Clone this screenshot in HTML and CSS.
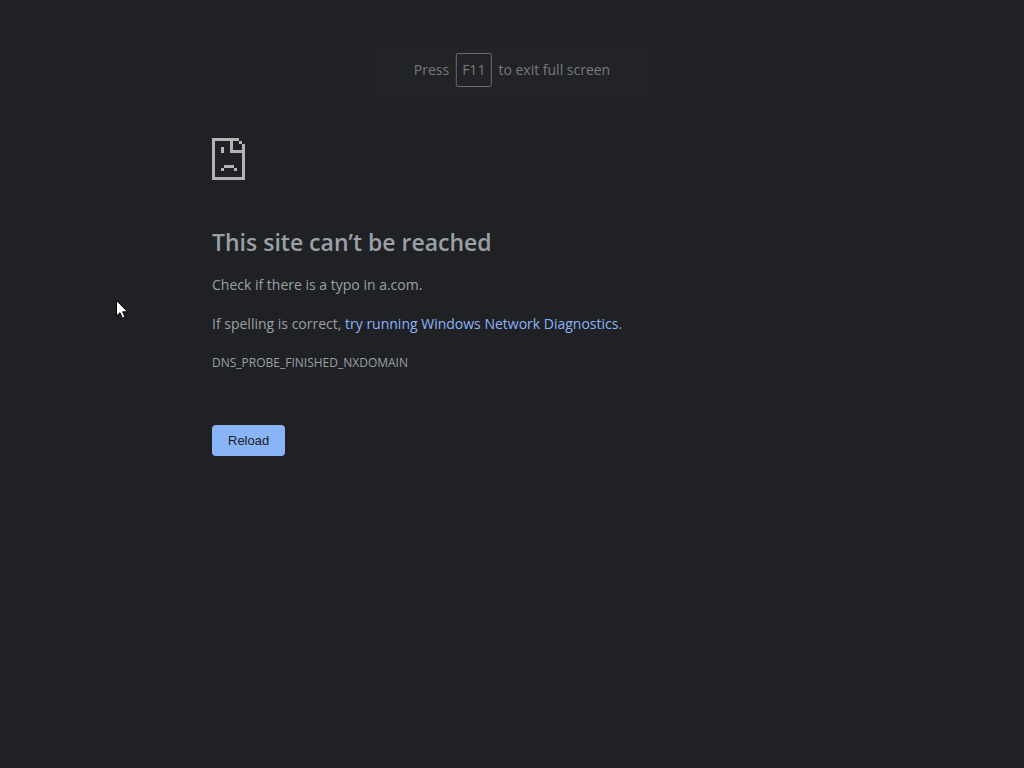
FILE: index.html
```
<!DOCTYPE html>
<html lang="en">
<head>
    <meta charset="UTF-8">
    <meta name="viewport" content="width=device-width, initial-scale=1.0">
    <title>a.com</title>
    <link rel="stylesheet" href="styles.css">
</head>
<body>
    <div class="fullscreen-notice">
        <span>Press</span>
        <kbd>F11</kbd>
        <span>to exit full screen</span>
    </div>

    <main class="error-page">
        <svg class="sad-page" viewBox="0 0 33 42" width="33" height="42" shape-rendering="crispEdges" aria-hidden="true">
            <!-- sheet with folded corner -->
            <path d="M0 0H27V3H30V6H33V42H0ZM3 3V39H30V15H18V3ZM21 3V12H30V6H27V3Z" fill-rule="evenodd"/>
            <!-- face -->
            <path d="M9 9H12V15H9ZM12 27H22V30H12ZM9 30H12V33H9ZM22 30H25V33H22Z"/>
        </svg>

        <h1>This site can’t be reached</h1>
        <p>Check if there is a typo in a.com.</p>
        <p>If spelling is correct, <a href="#">try running Windows Network Diagnostics</a>.</p>
        <div class="error-code">DNS_PROBE_FINISHED_NXDOMAIN</div>

        <button class="reload" type="button">Reload</button>
    </main>

    <svg class="cursor" viewBox="0 0 12 19" width="12" height="19" aria-hidden="true">
        <path d="M0.5 0.5V16L4 12.7L6.5 18.2L9 17L6.6 11.8H11.5Z"/>
    </svg>
</body>
</html>
```
FILE: styles.css
```
body {
    margin: 0;
    min-height: 100vh;
    background-color: #202124;
    color: #9aa0a6;
    font-family: "Open Sans", "Noto Sans", sans-serif;
    font-size: 14px;
    line-height: 24px;
}

/* Full screen hint */
.fullscreen-notice {
    position: absolute;
    top: 47px;
    left: 50%;
    transform: translateX(-50%);
    display: flex;
    align-items: center;
    gap: 7px;
    padding: 6px 39px 10px;
    background-color: #222327;
    border-radius: 4px;
    color: #77797c;
    white-space: nowrap;
}

.fullscreen-notice kbd {
    padding: 4px 5px;
    border: 1px solid #6b6d70;
    border-radius: 2px;
    font: inherit;
}

/* Error page */
.error-page {
    box-sizing: border-box;
    max-width: 600px;
    margin: 0 auto;
    padding-top: 138px;
}

.sad-page {
    display: block;
    margin-bottom: 47px;
    fill: #b4b4b4;
}

h1 {
    margin: 0 0 16px;
    font-size: 23px;
    font-weight: 600;
    line-height: 30px;
}

p {
    margin: 0 0 15px;
}

a {
    color: #8ab4f8;
    text-decoration: none;
}

.error-code {
    font-size: 12px;
}

.reload {
    display: block;
    margin-top: 50px;
    padding: 8px 16px;
    border: 0;
    border-radius: 4px;
    background-color: #8ab4f8;
    color: #202124;
    font-family: "Liberation Sans", Arial, sans-serif;
    font-size: 13px;
    line-height: 15px;
    cursor: pointer;
}

/* Mouse pointer */
.cursor {
    position: absolute;
    top: 300px;
    left: 116px;
    fill: #fff;
    stroke: #000;
    stroke-width: 1;
}
```
